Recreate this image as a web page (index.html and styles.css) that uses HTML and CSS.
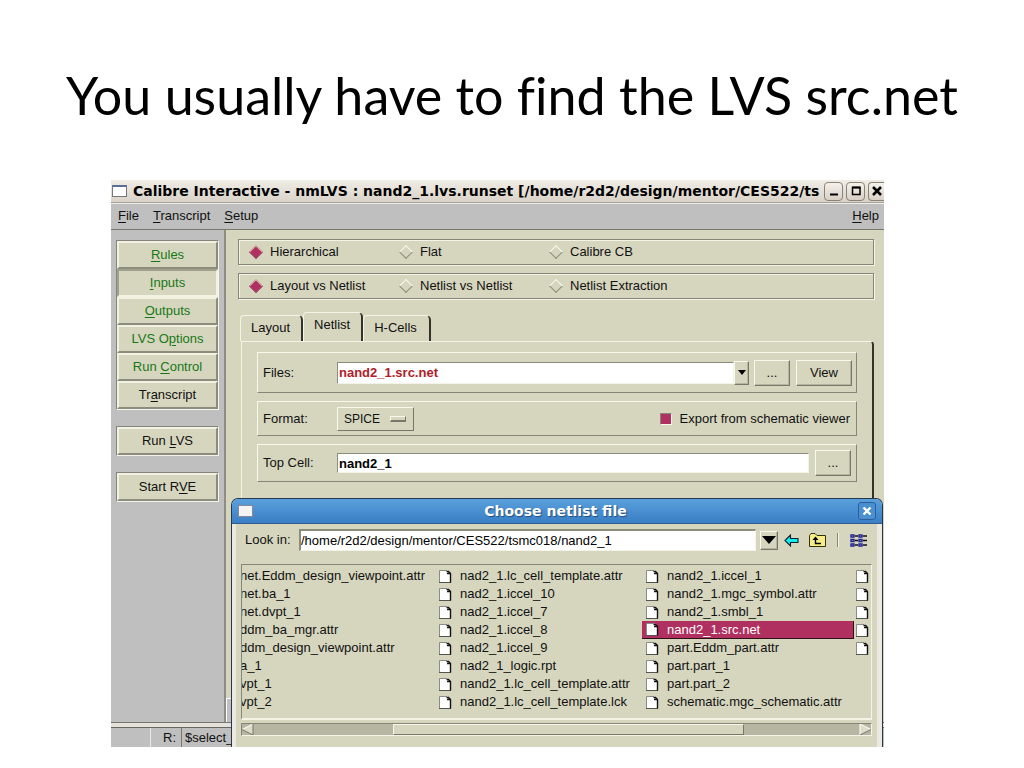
FILE: index.html
```html
<!DOCTYPE html>
<html lang="en">
<head>
<meta charset="utf-8">
<title>You usually have to find the LVS src.net</title>
<link rel="stylesheet" href="styles.css">
</head>
<body>
<svg class="defs" aria-hidden="true">
  <symbol id="doc" viewBox="0 0 13 13">
    <path d="M1 0.5H9L12 4V12H1Z" fill="#fff"/>
    <path d="M0.5 12V0.5H8" fill="none" stroke="#8c8c84"/>
    <path d="M0 12.5H12" stroke="#555550"/>
    <path d="M7.5 1.5H9.500L11.500 3.5V12.500M8 3.500H11" fill="none" stroke="#111" stroke-width="1.400"/>
  </symbol>
</svg>
<main class="slide">
  <h1 class="slide-title">You usually have to find the LVS src.net</h1>
  <section class="window">
    <header class="titlebar">
      <span class="win-icon"></span>
      <span class="titlebar-text">Calibre Interactive - nmLVS : nand2_1.lvs.runset [/home/r2d2/design/mentor/CES522/ts</span>
      <button class="win-btn" aria-label="Minimize"><svg width="12" height="12"><path d="M2 9.500H10" stroke="#000" stroke-width="2"/></svg></button>
      <button class="win-btn" aria-label="Maximize"><svg width="12" height="12"><path d="M2.500 2.500H10V9.500H2.500Z" fill="none" stroke="#000" stroke-width="1.500"/><path d="M2 2.500H10.500" stroke="#000" stroke-width="2"/></svg></button>
      <button class="win-btn win-btn-last" aria-label="Close"><svg width="12" height="12"><path d="M2 2L10 10M10 2L2 10" stroke="#000" stroke-width="2.500"/></svg></button>
    </header>
    <nav class="menubar">
      <a class="menu" href="#"><u>F</u>ile</a>
      <a class="menu" href="#"><u>T</u>ranscript</a>
      <a class="menu" href="#"><u>S</u>etup</a>
      <a class="menu menu-help" href="#"><u>H</u>elp</a>
    </nav>
    <div class="body">
      <aside class="sidebar">
        <div class="btn-group">
          <button class="side-btn green"><u>R</u>ules</button>
          <button class="side-btn green pressed"><u>I</u>nputs</button>
          <button class="side-btn green"><u>O</u>utputs</button>
          <button class="side-btn green">LVS O<u>p</u>tions</button>
          <button class="side-btn green">Run <u>C</u>ontrol</button>
          <button class="side-btn">Tr<u>a</u>nscript</button>
        </div>
        <div class="btn-group"><button class="side-btn">Run <u>L</u>VS</button></div>
        <div class="btn-group"><button class="side-btn">Start R<u>V</u>E</button></div>
      </aside>
      <div class="content">
        <div class="radio-row">
          <label class="radio"><input type="radio" name="mode" checked>Hierarchical</label>
          <label class="radio"><input type="radio" name="mode">Flat</label>
          <label class="radio"><input type="radio" name="mode">Calibre CB</label>
        </div>
        <div class="radio-row">
          <label class="radio"><input type="radio" name="cmp" checked>Layout vs Netlist</label>
          <label class="radio"><input type="radio" name="cmp">Netlist vs Netlist</label>
          <label class="radio"><input type="radio" name="cmp">Netlist Extraction</label>
        </div>
        <div class="tabs">
          <button class="tab">Layout</button>
          <button class="tab tab-on">Netlist</button>
          <button class="tab">H-Cells</button>
        </div>
        <div class="panel">
          <div class="field-row row-files">
            <label class="field-label" for="files">Files:</label>
            <input class="field field-red" id="files" type="text" value="nand2_1.src.net">
            <button class="btn drop" aria-label="Show files"><svg width="8" height="5"><path d="M0 0H8L4 5Z"/></svg></button>
            <button class="btn dots">...</button>
            <button class="btn view">View</button>
          </div>
          <div class="field-row row-format">
            <label class="field-label" for="format">Format:</label>
            <span class="select-wrap"><select class="select" id="format"><option>SPICE</option></select><i class="select-mark"></i></span>
            <label class="check"><input type="checkbox" checked>Export from schematic viewer</label>
          </div>
          <div class="field-row row-top">
            <label class="field-label" for="topcell">Top Cell:</label>
            <input class="field" id="topcell" type="text" value="nand2_1">
            <button class="btn dots">...</button>
          </div>
        </div>
        <div class="corner"></div>
      </div>
    </div>
    <footer class="status">
      <span class="status-cell status-blank"></span>
      <span class="status-cell status-r">R:</span>
      <span class="status-cell status-cmd">$select_</span>
    </footer>

    <section class="dialog" role="dialog" aria-label="Choose netlist file">
      <header class="dialog-head">
        <span class="win-icon dialog-icon"></span>
        <span class="dialog-title">Choose netlist file</span>
        <button class="dialog-close" aria-label="Close"><svg width="10" height="10"><path d="M1.500 1.500L8.500 8.500M8.500 1.500L1.500 8.500" stroke="#fff" stroke-width="2.400"/></svg></button>
      </header>
      <div class="dialog-body">
        <div class="look">
          <label class="look-label" for="look">Look in:</label>
          <input class="field look-field" id="look" type="text" value="/home/r2d2/design/mentor/CES522/tsmc018/nand2_1">
          <button class="btn look-drop" aria-label="Show folders"><svg width="14" height="8"><path d="M0 0H14L7 8Z"/></svg></button>
          <button class="tool" aria-label="Back"><svg width="15" height="13"><path d="M1 6.500L6.500 1V4.500H14V8.500H6.500V12Z" fill="#1ee" stroke="#123" stroke-width="1.100"/></svg></button>
          <button class="tool tool-up" aria-label="Up one folder"><svg width="17" height="14"><path d="M.5 13.500V2.500L2 .5H6L8 2.500H16.500V13.500Z" fill="#f6ee84" stroke="#332f10"/><path d="M6.500 5V10.500H12" fill="none" stroke="#000" stroke-width="1.400"/><path d="M3.500 7L6.500 3.500L9.500 7Z"/></svg></button>
          <span class="tool-sep"></span>
          <button class="tool" aria-label="List view"><svg width="18" height="13"><g fill="none" stroke="#22229a" stroke-width="1.400"><path d="M1 1h3v2h-3zM1 5.500h3v2h-3zM1 10h3v2h-3zM9 1h3v2h-3zM9 5.500h3v2h-3zM9 10h3v2h-3z"/></g><path d="M5 2h3M5 6.500h3M5 11h3M13 2h4M13 6.500h4M13 11h4" stroke="#111" stroke-width="1.400"/></svg></button>
        </div>
        <div class="files">
          <ul class="col col-cut">
            <li>net.Eddm_design_viewpoint.attr</li>
            <li>net.ba_1</li>
            <li>net.dvpt_1</li>
            <li>ddm_ba_mgr.attr</li>
            <li>ddm_design_viewpoint.attr</li>
            <li>a_1</li>
            <li>vpt_1</li>
            <li>vpt_2</li>
          </ul>
          <ul class="col">
            <li><svg class="doc"><use href="#doc"/></svg>nad2_1.lc_cell_template.attr</li>
            <li><svg class="doc"><use href="#doc"/></svg>nad2_1.iccel_10</li>
            <li><svg class="doc"><use href="#doc"/></svg>nad2_1.iccel_7</li>
            <li><svg class="doc"><use href="#doc"/></svg>nad2_1.iccel_8</li>
            <li><svg class="doc"><use href="#doc"/></svg>nad2_1.iccel_9</li>
            <li><svg class="doc"><use href="#doc"/></svg>nad2_1_logic.rpt</li>
            <li><svg class="doc"><use href="#doc"/></svg>nand2_1.lc_cell_template.attr</li>
            <li><svg class="doc"><use href="#doc"/></svg>nand2_1.lc_cell_template.lck</li>
          </ul>
          <ul class="col col-wide">
            <li><svg class="doc"><use href="#doc"/></svg>nand2_1.iccel_1</li>
            <li><svg class="doc"><use href="#doc"/></svg>nand2_1.mgc_symbol.attr</li>
            <li><svg class="doc"><use href="#doc"/></svg>nand2_1.smbl_1</li>
            <li class="selected"><svg class="doc"><use href="#doc"/></svg>nand2_1.src.net</li>
            <li><svg class="doc"><use href="#doc"/></svg>part.Eddm_part.attr</li>
            <li><svg class="doc"><use href="#doc"/></svg>part.part_1</li>
            <li><svg class="doc"><use href="#doc"/></svg>part.part_2</li>
            <li><svg class="doc"><use href="#doc"/></svg>schematic.mgc_schematic.attr</li>
          </ul>
          <ul class="col col-last">
            <li><svg class="doc"><use href="#doc"/></svg></li>
            <li><svg class="doc"><use href="#doc"/></svg></li>
            <li><svg class="doc"><use href="#doc"/></svg></li>
            <li><svg class="doc"><use href="#doc"/></svg></li>
            <li><svg class="doc"><use href="#doc"/></svg></li>
          </ul>
        </div>
        <div class="scroll">
          <svg width="12" height="11"><path d="M11 0V11L0 5.500Z" fill="#dcdcc8"/><path d="M11 0L0 5.500" stroke="#fff"/><path d="M11 0V11L0 5.500" fill="none" stroke="#77776a"/></svg>
          <div class="track"><span class="thumb"></span></div>
          <svg width="12" height="11"><path d="M1 0V11L12 5.500Z" fill="#dcdcc8"/><path d="M1 11V0L12 5.500" fill="none" stroke="#fff"/><path d="M1 11L12 5.500" stroke="#77776a"/></svg>
        </div>
      </div>
    </section>
  </section>
</main>
</body>
</html>
```

FILE: styles.css
```css
* { box-sizing: border-box; }

body {
  margin: 0;
  background: #fff;
  color: #111;
  font: 13px/18px "Liberation Sans", Arial, sans-serif;
}

button, input, select { font: inherit; color: inherit; }
button { padding: 0; }

.defs { position: absolute; width: 0; height: 0; }

.slide { padding: 63px 140px 20px 111px; }

.slide-title {
  margin: 0 -140px 53px -111px;
  color: #000;
  font: 400 52px/64px Lato, Carlito, sans-serif;
  font-variant-ligatures: none;
  text-align: center;
  white-space: nowrap;
}

.window {
  position: relative;
  display: flex;
  flex-direction: column;
  min-height: 567px;
  overflow: hidden;
  background: #d6d6be;
}

/* Title bar */
.titlebar {
  display: flex;
  align-items: center;
  height: 23px;
  padding-left: 1px;
  border-bottom: 1px solid #a8a296;
  background: linear-gradient(#f0ede6, #d9d2c8);
  color: #000;
  font: bold 14px/20px "DejaVu Sans", sans-serif;
}

.win-icon {
  flex: none;
  width: 15px;
  height: 12px;
  border: 1px solid #777;
  border-top: 2px solid #5a6c98;
  background: #fff;
}

.titlebar-text {
  flex: 1;
  margin: 0 3px 0 6px;
  overflow: hidden;
  white-space: nowrap;
}

.win-btn {
  display: grid;
  place-items: center;
  flex: none;
  width: 19px;
  height: 19px;
  margin-right: 3px;
  border: 1px solid #8a8378;
  border-radius: 4px;
  background: linear-gradient(#f5f2ec, #d8d0c5);
}

.win-btn-last {
  width: 16px;
  margin-right: 0;
  border-right: 0;
  border-radius: 4px 0 0 4px;
}

/* Menu bar */
.menubar {
  display: flex;
  gap: 14px;
  height: 27px;
  padding: 3px 5px 5px 7px;
  border-top: 1px solid #eee;
  border-bottom: 1px solid #77776e;
  background: #bfbfbf;
}

.menu { color: inherit; text-decoration: none; }
.menu-help { margin-left: auto; }
u { text-underline-offset: 2px; }

.body { display: flex; flex: 1; }

/* Sidebar */
.sidebar {
  display: flex;
  flex-direction: column;
  gap: 16px;
  width: 115px;
  padding: 10px 5px;
  border-right: 2px solid #8d8d86;
  background: #bfbfbf;
}

.btn-group {
  border: 1px solid;
  border-color: #85857e #f4f4ec #f4f4ec #85857e;
  background: #d6d6be;
}

.side-btn {
  display: block;
  width: 100%;
  height: 28px;
  border: 2px solid;
  border-color: #f2f2e2 #8c8c7c #8c8c7c #f2f2e2;
  background: #d6d6be;
}

.green { color: #187818; }
.pressed { border-color: #a0a08e #f2f2e2 #f2f2e2 #a0a08e; }

/* Main content */
.content {
  position: relative;
  display: flex;
  flex: 1;
  flex-direction: column;
  padding: 9px 10px 0 12px;
}

.radio-row {
  display: grid;
  grid-template-columns: 150px 150px 1fr;
  align-items: center;
  height: 26px;
  margin-bottom: 8px;
  padding-left: 10px;
  border: 1px solid #85857a;
  box-shadow: inset 1px 1px #f4f4e6, 1px 1px #f4f4e6;
}

.radio { display: flex; align-items: center; gap: 9px; }

.radio input {
  appearance: none;
  width: 10px;
  height: 10px;
  margin: 0 0 0 2px;
  border: 1px solid;
  border-color: #f8f8ec #8c8c7c #8c8c7c #f8f8ec;
  transform: rotate(45deg);
}

.radio input:checked { border-color: #d6c4b4 #a04868 #a04868 #d6c4b4; background: #b03060; }

.tabs { display: flex; align-items: flex-end; margin: 5px 0 0 2px; }

.tab {
  height: 26px;
  padding: 0 11px 2px 10px;
  border: 1px solid #f4f4e6;
  border-right: 2px solid #33332c;
  border-bottom: 0;
  border-radius: 4px 5px 0 0;
  background: #d6d6be;
}

.tab-on { height: 29px; padding-bottom: 4px; }
.tab:last-child { padding-right: 12px; }

.panel {
  display: flex;
  flex: 1;
  flex-direction: column;
  gap: 8px;
  margin-left: 3px;
  padding: 10px 15px;
  border: 1px solid #f4f4e6;
  border-right: 2px solid #33332c;
  border-bottom: 0;
  border-top-right-radius: 4px;
}

.field-row {
  display: flex;
  align-items: center;
  padding: 0 4px 0 5px;
  border: 1px solid;
  border-color: #f8f8ec #85857a #85857a #f8f8ec;
}

.row-files { height: 41px; }
.row-format { height: 35px; }
.row-top { height: 38px; }

.field-label { flex: none; width: 74px; }

.field {
  flex: 1;
  min-width: 0;
  height: 22px;
  padding: 0 1px;
  border: 1px solid;
  border-color: #8c8c7c #f4f4e6 #f4f4e6 #8c8c7c;
  border-radius: 0;
  background: #fff;
  color: #000;
  font-weight: bold;
}

.field-red { color: #b02028; }
.row-top .field { height: 20px; margin-right: 3px; }

.btn {
  display: grid;
  place-items: center;
  flex: none;
  border: 1px solid;
  border-color: #f8f8ec #77776a #77776a #f8f8ec;
  box-shadow: inset -1px -1px #b4b4a0;
  background: #d6d6be;
}

.drop { width: 15px; height: 24px; }
.dots { width: 36px; height: 26px; margin-left: 5px; }
.view { width: 56px; height: 26px; margin-left: 6px; }
.row-top .dots { margin-left: 3px; margin-right: 1px; }

.select-wrap { position: relative; }

.select {
  appearance: none;
  width: 77px;
  height: 24px;
  padding: 0 6px;
  border: 1px solid;
  border-color: #f8f8ec #77776a #77776a #f8f8ec;
  border-radius: 0;
  background: #d6d6be;
  font-size: 12px;
}

.select-mark {
  position: absolute;
  top: 9px;
  right: 8px;
  width: 16px;
  height: 6px;
  border: 1px solid;
  border-color: #f8f8ec #77776a #77776a #f8f8ec;
  border-bottom-width: 2px;
}

.check { display: flex; align-items: center; gap: 8px; margin: 0 2px 0 auto; }

.check input {
  appearance: none;
  width: 12px;
  height: 12px;
  margin: 0;
  border: 1px solid;
  border-color: #85857a #f8f8ec #f8f8ec #85857a;
  background: #b03060;
}

.corner {
  position: absolute;
  bottom: 0;
  left: 0;
  width: 12px;
  height: 24px;
  border-top: 1px solid #fff;
  border-left: 1px solid #fff;
  background: #bfbfbf;
}

/* Status bar */
.status {
  display: flex;
  height: 25px;
  border-top: 1px solid #77776e;
  background: #bfbfbf;
  box-shadow: inset 0 4px #e4e1da, inset 0 5px #66665e;
}

.status-cell {
  margin-top: 5px;
  border-right: 1px solid #e8e8e8;
  line-height: 19px;
}

.status-blank { width: 40px; }
.status-r { width: 31px; padding-left: 12px; border-right-color: #77776e; }
.status-cmd { padding-left: 3px; border-right: 0; }

/* File dialog */
.dialog {
  position: absolute;
  top: 318px;
  right: 1px;
  bottom: 0;
  left: 120px;
  display: flex;
  flex-direction: column;
  border: 1px solid #25384e;
  border-bottom: 0;
  border-radius: 7px 7px 0 0;
  background: #d6d6be;
}

.dialog-head {
  display: flex;
  align-items: center;
  height: 25px;
  padding: 0 6px;
  border-bottom: 1px solid #2c5c92;
  border-radius: 6px 6px 0 0;
  background: linear-gradient(#5aa0dc, #3a7ec4);
}

.dialog-icon { border: 1px solid #889; background: #f4f4f4; }

.dialog-title {
  flex: 1;
  color: #fff;
  font: bold 14px/20px "DejaVu Sans", sans-serif;
  text-align: center;
  text-shadow: 1px 1px 1px #1f4c80;
}

.dialog-close {
  display: grid;
  place-items: center;
  width: 18px;
  height: 18px;
  border: 1px solid #2a5f9c;
  border-radius: 3px;
  background: #4a8fd2;
}

.dialog-body {
  flex: 1;
  padding: 5px 5px 0;
  border: 3px solid #ece9e0;
  border-width: 0 5px 0 4px;
}

.look { display: flex; align-items: center; height: 22px; margin: 0 4px 13px; }
.look-label { width: 54px; }

.look-field {
  border-width: 2px 1px 1px 2px;
  padding: 0;
  font-weight: normal;
}

.look-drop { width: 18px; height: 19px; margin-left: 4px; }

.tool {
  display: grid;
  place-items: center;
  margin-left: 6px;
  border: 0;
  background: none;
}

.tool-up { margin-left: 10px; }

.tool-sep {
  width: 2px;
  height: 14px;
  margin: 0 5px 0 11px;
  border-left: 1px solid #85857a;
  border-right: 1px solid #f4f4e6;
}

.files {
  display: flex;
  height: 156px;
  padding-top: 2px;
  overflow: hidden;
  border: 1px solid;
  border-color: #85857a #f4f4e6 #f4f4e6 #85857a;
  border-bottom-width: 2px;
}

.col {
  flex: none;
  width: 207px;
  margin: 0;
  padding: 0;
  list-style: none;
  white-space: nowrap;
}

.col li {
  display: flex;
  align-items: center;
  height: 18px;
  padding-left: 4px;
  line-height: 18px;
}

.col-cut { width: 193px; }
.col-cut li { margin-left: -6px; }
.col-wide { width: 212px; }
.col-last { width: 18px; }
.col-last li { padding-left: 2px; }

.doc { flex: none; width: 13px; height: 13px; margin-right: 8px; }

.col .selected {
  border-right: 1px solid #301018;
  border-bottom: 1px solid #301018;
  background: #b03060;
  color: #fff;
}

.scroll {
  display: flex;
  align-items: center;
  height: 13px;
  margin-top: 3px;
  border: 1px solid;
  border-color: #85857a #f4f4e6 #f4f4e6 #85857a;
  background: #b6b6a2;
}

.track { flex: 1; height: 100%; }

.thumb {
  display: block;
  width: 58%;
  height: 100%;
  margin-left: 23%;
  border: 1px solid;
  border-color: #f8f8ec #77776a #77776a #f8f8ec;
  background: #d6d6be;
}
```
